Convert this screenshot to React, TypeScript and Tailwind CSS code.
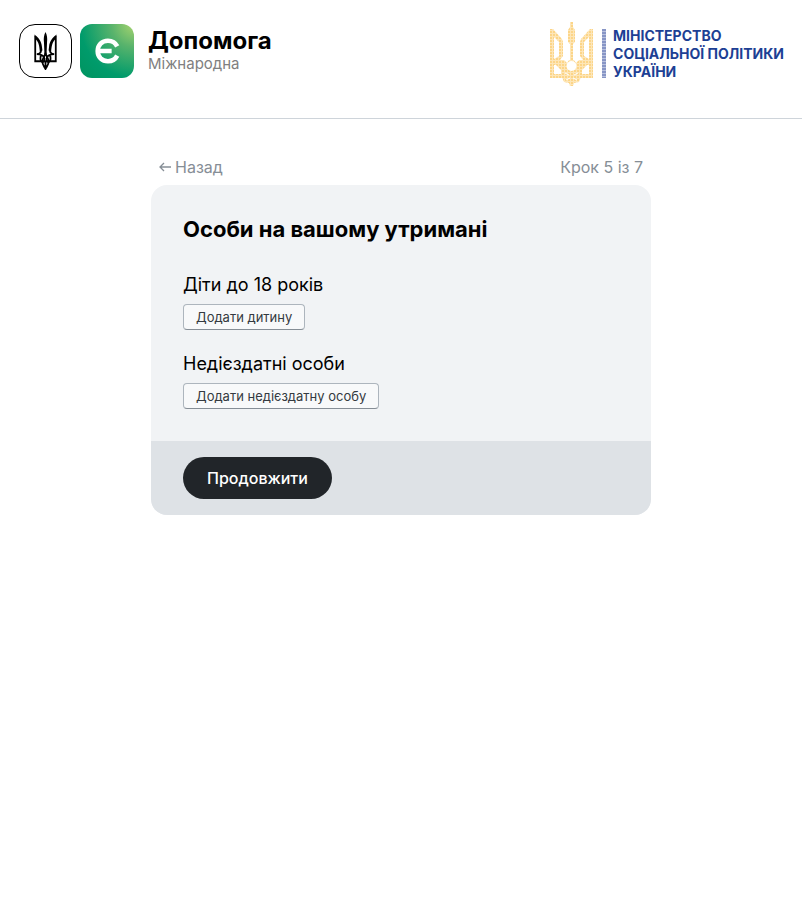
import type { SVGProps } from "react";

const DEPENDANTS = [
  { title: "Діти до 18 років", action: "Додати дитину" },
  { title: "Недієздатні особи", action: "Додати недієздатну особу" },
];

const MINISTRY_LINES = ["Міністерство", "соціальної політики", "України"];

function Trident(props: SVGProps<SVGSVGElement>) {
  return (
    <svg viewBox="0 0 44 74" fill="none" aria-hidden="true" {...props}>
      <path d="M22 0C25 6 26 12 25 20L24 44H20L19 20C18 12 19 6 22 0Z" fill="currentColor" />
      <path d="M0 5C8 10 14 18 15 28L16 36L11 38C10 27 9 20 3 14M44 5C36 10 30 18 29 28L28 36L33 38C34 27 35 20 41 14" fill="currentColor" />
      <g stroke="currentColor" strokeWidth="3.500">
        <path d="M2 8V57H42V8" />
        <path d="M13 34C14 40 11 43 5 43C11 43 17 45 19 49C22 55 18 61 14 57C11 54 12 49 13 45" />
        <path d="M31 34C30 40 33 43 39 43C33 43 27 45 25 49C22 55 26 61 30 57C33 54 32 49 31 45" />
        <path d="M22 40C22 46 16 50 16 58C16 65 20 67 22 72C24 67 28 65 28 58C28 50 22 46 22 40ZM22 57V72" />
      </g>
    </svg>
  );
}

function DottedTrident() {
  return (
    <svg className="h-16 w-11 shrink-0" viewBox="0 0 44 64" aria-hidden="true">
      <defs>
        <pattern id="dots" width="3" height="3" patternUnits="userSpaceOnUse">
          <rect width="3" height="3" fill="#fff" />
          <rect width="3" height="3" fill="#fbc14d" opacity="0.4" />
          <rect width="2" height="2" fill="#fbc14d" opacity="0.45" />
        </pattern>
      </defs>
      <g fill="url(#dots)">
        <path d="M20 0H23V5L25 8V20L23 22V38H20V22L18 20V8L20 5Z" />
        <path d="M0 7H3L12 17L13 20V34L10 38H14L17 41L19 38H24L26 41L29 38H33L30 34V20L31 17L40 7H43V56H0ZM4 15V37L9 34V20ZM39 15V37L34 34V20ZM21.500 39A5 5 0 1 0 21.500 49A5 5 0 1 0 21.500 39ZM4 43V52H11V48L6 43ZM39 43V52H32V48L37 43Z" fillRule="evenodd" />
        <path d="M12 55H31L29 60L24 61L23 64H20L19 61L14 60Z" />
      </g>
      <path d="M15 51L19 53M28 51L24 53M16 58L20 56M27 58L23 56" stroke="#fff" strokeWidth="1" />
    </svg>
  );
}

function Header() {
  return (
    <header className="flex h-[119px] items-start justify-between border-b border-[#ced4da] pt-[22px] pr-[18px] pl-[19px]">
      <div className="flex pt-[2px]">
        <div className="flex h-[54px] w-[53px] items-center justify-center rounded-2xl border border-black">
          <Trident className="h-[38px] w-[23px] text-black" />
        </div>
        <div className="ml-2 flex h-[54px] w-[54px] items-center justify-center rounded-xl bg-[radial-gradient(circle_at_100%_0%,#a8d46f_0%,#58b36c_30%,#009b6b_70%,#00935f_100%)]">
          <svg className="h-[26px] w-[26px]" viewBox="0 0 28 28" fill="none" stroke="#fff" strokeWidth="5" aria-label="Є">
            <path d="M25 9C23 5 19 3 15 3C8.500 3 4 7.500 4 14S8.500 25 15 25C19 25 23 23 25 19M4 14H19" />
          </svg>
        </div>
        <div className="ml-[14px] pt-[5px]">
          <p className="text-2xl leading-6 font-bold text-black">Допомога</p>
          <p className="text-[15px] leading-[22px] text-[#808080]">Міжнародна</p>
        </div>
      </div>
      <div className="flex">
        <DottedTrident />
        <div className="mt-[7px] ml-2 h-[49px] w-1 bg-[repeating-linear-gradient(#8795c5_0px_2px,#b8c1de_2px_3px)]" />
        <p className="mt-[5px] ml-[7px] text-sm leading-[18px] font-bold text-[#1d3f94] uppercase">
          {MINISTRY_LINES.map((line) => (
            <span key={line} className="block whitespace-nowrap">
              {line}
            </span>
          ))}
        </p>
      </div>
    </header>
  );
}

export default function App() {
  return (
    <div className="min-h-screen bg-white font-['Inter',sans-serif] text-black">
      <Header />
      <main className="mx-auto w-full max-w-[500px] pt-9">
        <div className="flex justify-between px-2 pb-[6px] text-base leading-6 text-[#868e96]">
          <a href="#back" className="flex items-center gap-1">
            <svg className="h-3 w-3" viewBox="0 0 12 12" fill="none" stroke="currentColor" strokeWidth="1.300" aria-hidden="true">
              <path d="M12 6H1M5 2L1 6L5 10" />
            </svg>
            Назад
          </a>
          <span>Крок 5 із 7</span>
        </div>
        <form className="overflow-hidden rounded-2xl bg-[#f1f3f5]">
          <div className="px-8 pt-7 pb-8">
            <h1 className="mb-[26px] text-[22px] leading-8 font-bold">Особи на вашому утримані</h1>
            <div className="flex flex-col gap-5">
              {DEPENDANTS.map((item) => (
                <section key={item.title}>
                  <h2 className="mb-[5px] text-lg leading-7">{item.title}</h2>
                  <button
                    type="button"
                    className="block h-[26px] rounded-[4px] border border-[#adb5bd] border-b-[#868e96] bg-[#f8f9fa] px-3 text-[13px] leading-6 text-[#343a40]"
                  >
                    {item.action}
                  </button>
                </section>
              ))}
            </div>
          </div>
          <div className="bg-[#dee2e6] px-8 py-4">
            <button type="submit" className="block h-[42px] rounded-full bg-[#212529] px-6 text-base font-medium text-white">
              Продовжити
            </button>
          </div>
        </form>
      </main>
    </div>
  );
}
